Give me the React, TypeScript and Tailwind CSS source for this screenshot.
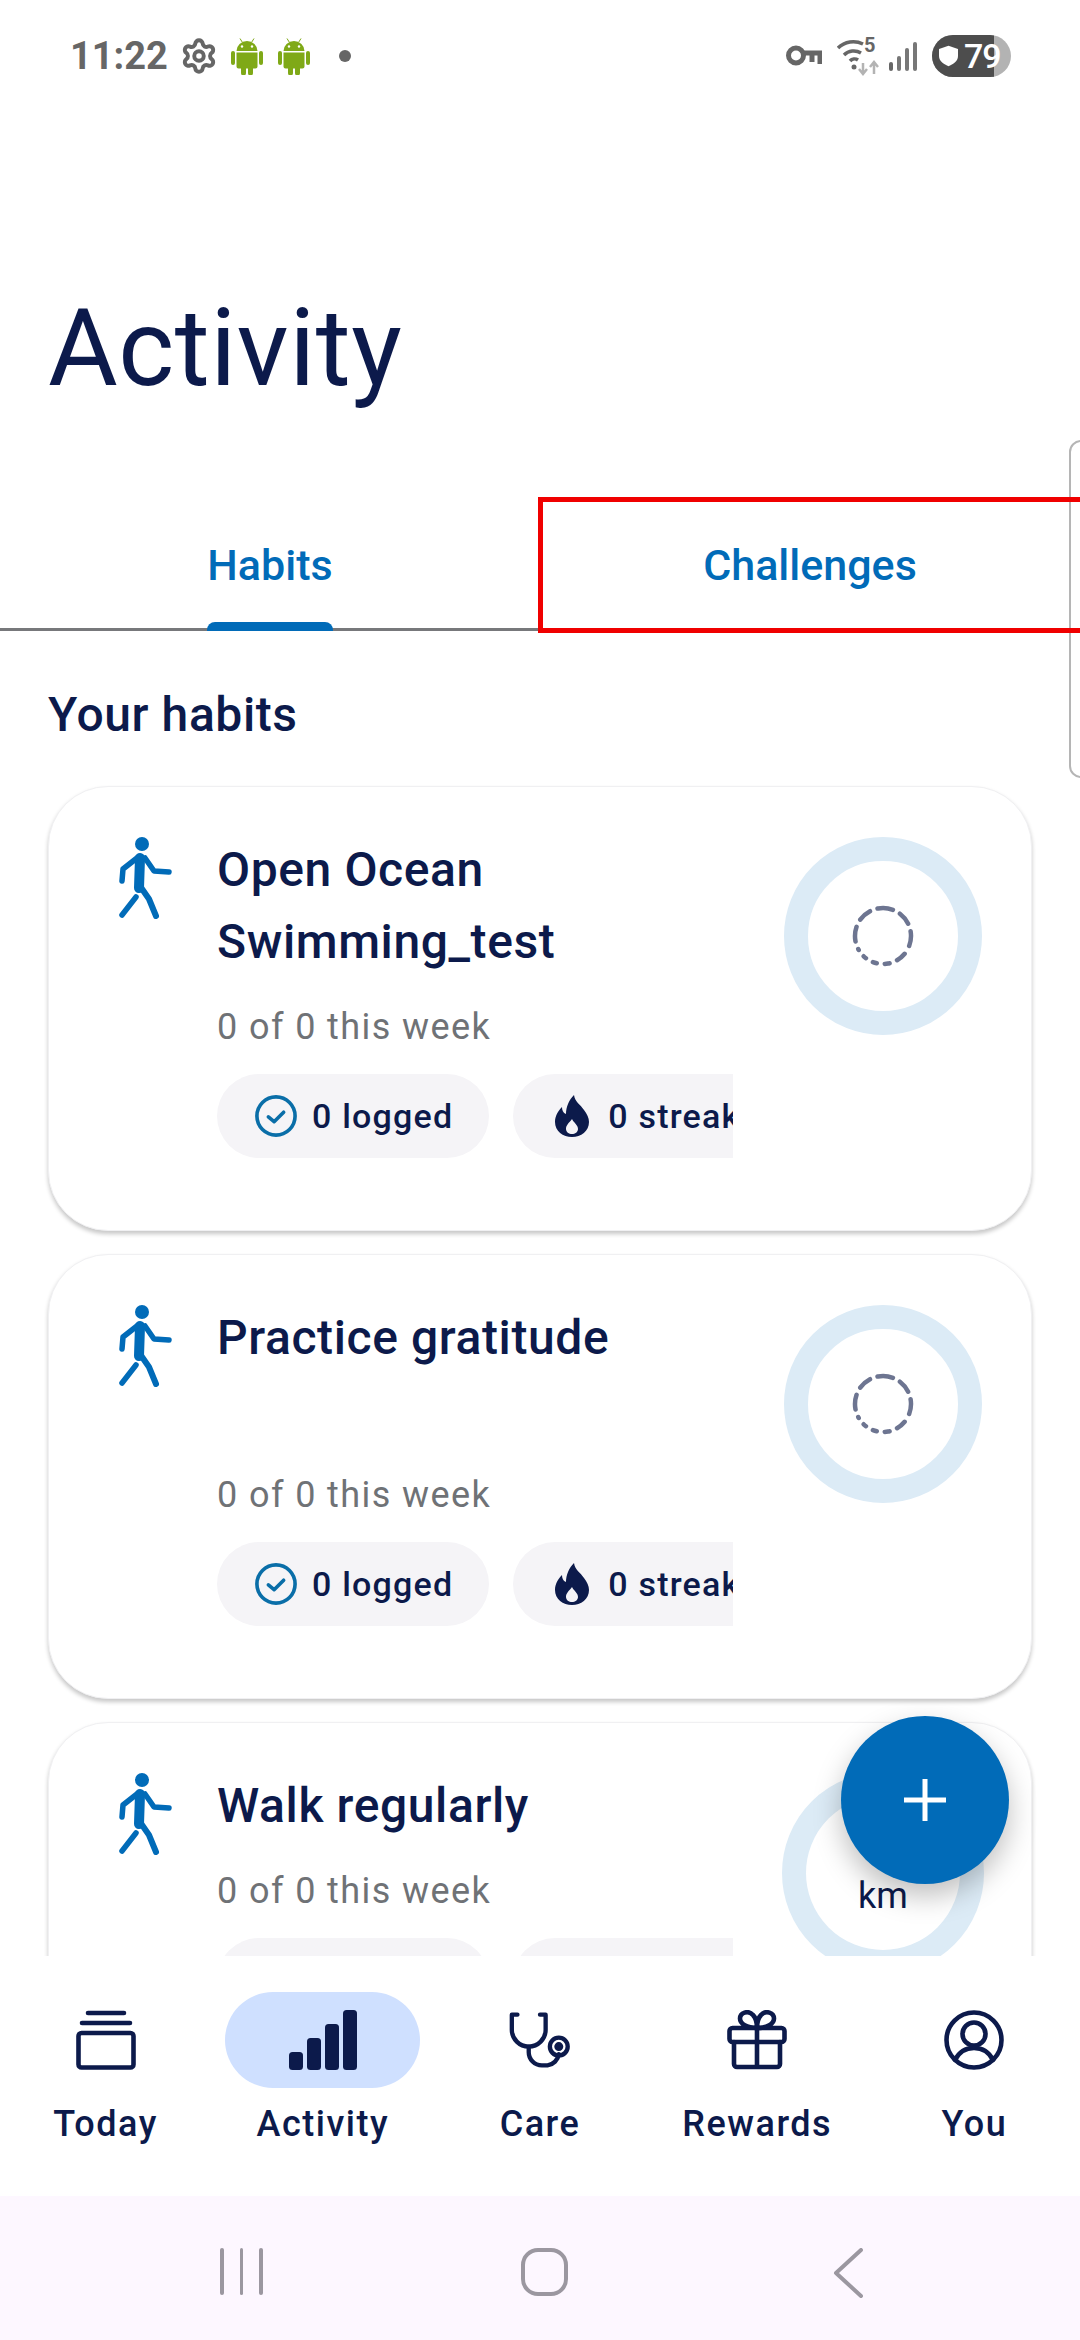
import { Settings } from "lucide-react";

const NAVY = "#0c1a4b";
const BLUE = "#016bb8";

function AndroidIcon() {
  return (
    <svg width="32" height="38" viewBox="0 0 32 38" fill="#7fa917">
      <path d="M9 1.5l2.2 3.5M23 1.5l-2.2 3.5" stroke="#7fa917" strokeWidth="1" />
      <path d="M5.5 14a10.5 10 0 0 1 21 0z" />
      <path d="M5.5 15.5h21v14a2 2 0 0 1-2 2h-2.5v4.5a2.5 2.5 0 0 1-5 0v-4.5h-2v4.5a2.5 2.5 0 0 1-5 0v-4.5H7.500a2 2 0 0 1-2-2z" />
      <rect x="0" y="14" width="4" height="14" rx="2" />
      <rect x="28" y="14" width="4" height="14" rx="2" />
      <circle cx="11" cy="9.500" r="1.200" fill="#fff" />
      <circle cx="21" cy="9.500" r="1.200" fill="#fff" />
    </svg>
  );
}

function StatusBar() {
  return (
    <div className="flex h-[85px] shrink-0 items-center justify-between pt-[26px] pl-[70px] pr-[69px]">
      <div className="flex items-center">
        <span className="w-[93px] text-[38px] font-bold leading-none text-[#666666]">11:22</span>
        <Settings size={38} strokeWidth={2.5} color="#666666" className="ml-[17px]" />
        <div className="ml-[13px] flex gap-[15px]">
          <AndroidIcon />
          <AndroidIcon />
        </div>
        <span className="ml-[29px] h-[12px] w-[12px] rounded-full bg-[#666666]" />
      </div>
      <div className="flex items-center">
        <svg width="36" height="22" viewBox="0 0 36 22" fill="none" stroke="#666666">
          <circle cx="10" cy="10.500" r="7.500" strokeWidth="5" />
          <path d="M17 8h17v11M26 8v9" strokeWidth="5" />
        </svg>
        <svg width="42" height="40" viewBox="0 0 42 40" fill="none" className="ml-[15px]">
          <path d="M1 12a22 22 0 0 1 25-4" stroke="#666666" strokeWidth="3.500" />
          <path d="M7 19a14 14 0 0 1 17-2" stroke="#666666" strokeWidth="3.500" />
          <path d="M13 25a6 6 0 0 1 8-1" stroke="#666666" strokeWidth="3.500" />
          <circle cx="17" cy="31" r="2.500" fill="#666666" />
          <path d="M26 27v11M22 33l4 5 4-5" stroke="#b3b3b3" strokeWidth="2.500" />
          <path d="M37 38V27M33 31l4-5 4 5" stroke="#b3b3b3" strokeWidth="2.500" />
          <text x="27" y="16" fontFamily="Roboto, sans-serif" fontSize="20" fontWeight="700" fill="#666666">5</text>
        </svg>
        <div className="ml-[10px] flex h-[30px] items-end gap-[4px]">
          <span className="h-[9px] w-[4px] rounded-full bg-[#666666]" />
          <span className="h-[15px] w-[4px] rounded-full bg-[#777777]" />
          <span className="h-[23px] w-[4px] rounded-full bg-[#777777]" />
          <span className="h-[29px] w-[4px] rounded-full bg-[#777777]" />
        </div>
        <div className="relative ml-[15px] flex h-[42px] w-[79px] items-center overflow-hidden rounded-full bg-[#b3b3b3]">
          <div className="absolute inset-y-0 left-0 w-[62px] bg-[#4d4d4d]" />
          <svg width="19" height="22" viewBox="0 0 24 26" fill="#fff" className="relative ml-[7px] shrink-0">
            <path d="M12 0l12 4v9c0 6-5 10-12 13C5 23 0 19 0 13V4z" />
          </svg>
          <span className="relative ml-[6px] text-[34px] font-medium leading-none tracking-[-1px] text-white">79</span>
        </div>
      </div>
    </div>
  );
}

function WalkIcon() {
  return (
    <svg width="60" height="85" viewBox="0 0 60 85" fill="none" stroke={BLUE} strokeLinecap="round" strokeLinejoin="round">
      <circle cx="26" cy="10" r="7" fill={BLUE} stroke="none" />
      <path d="M24 24l-1 30" strokeWidth="10" />
      <path d="M21 24L7 35l-1 12" strokeWidth="5.500" />
      <path d="M29 24l9 13 15 1" strokeWidth="5.500" />
      <path d="M24 52l9 13 7 17" strokeWidth="6" />
      <path d="M20 63L6 81" strokeWidth="5.500" />
    </svg>
  );
}

function CheckIcon() {
  return (
    <svg width="42" height="42" viewBox="0 0 44 44" fill="none" stroke="#0a6ea8">
      <circle cx="22" cy="22" r="20" strokeWidth="3.800" />
      <path d="M14 23l6 5 10-10" strokeWidth="3.800" strokeLinecap="round" strokeLinejoin="round" />
    </svg>
  );
}

function FlameIcon() {
  return (
    <svg width="34" height="42" viewBox="0 0 34 42" fill={NAVY}>
      <path
        fillRule="evenodd"
        d="M19 0c1 7 6 9 10 15 3 4 5 8 5 12 0 9-8 15-17 15S0 36 0 27c0-6 3-11 7-15 0 3 1 6 4 7C11 12 14 5 19 0zM17 24c-3 4-6 6-6 10 0 3 3 5 6 5s6-2 6-5c0-4-4-6-6-10z"
      />
    </svg>
  );
}

function Spinner() {
  return (
    <svg width="62" height="62" viewBox="0 0 62 62" fill="none">
      <circle
        cx="31"
        cy="31"
        r="28"
        stroke="#6d7591"
        strokeWidth="4.500"
        strokeLinecap="round"
        strokeDasharray="15 8 13 8 15 9 10 8 5 8 4 8 3 8 1 8"
        transform="rotate(-100 31 31)"
      />
    </svg>
  );
}

function Chip({ icon, label }: { icon: React.ReactNode; label: string }) {
  return (
    <div className="flex h-[84px] shrink-0 items-center rounded-full bg-[#f5f4f7] pl-[38px] pr-[36px]">
      <span className="flex w-[42px] shrink-0 justify-center">{icon}</span>
      <span className="ml-[15px] whitespace-nowrap text-[34px] font-medium tracking-[1.2px] text-[#0c1a4b]">{label}</span>
    </div>
  );
}

function HabitCard({ title, tall, ring }: { title: string[]; tall?: boolean; ring: React.ReactNode }) {
  return (
    <div className="flex h-[445px] shrink-0 rounded-[60px] border border-[#f0f0f2] bg-white pl-[67px] pt-[47px] shadow-[0_3px_4px_rgba(0,0,0,0.22)]">
      <div className="w-[101px] shrink-0">
        <WalkIcon />
      </div>
      <div className="w-[516px] shrink-0">
        <div className={`text-[48px] font-medium leading-[72px] tracking-[0.6px] text-[#0c1a4b] ${tall ? "h-[144px]" : ""}`}>
          {title.map((t) => (
            <div key={t}>{t}</div>
          ))}
        </div>
        <div className="mt-[25px] text-[36px] leading-[48px] tracking-[1.4px] text-[#6f7276]">0 of 0 this week</div>
        <div className="mt-[23px] flex gap-[24px] overflow-hidden">
          <Chip icon={<CheckIcon />} label="0 logged" />
          <Chip icon={<FlameIcon />} label="0 streak" />
        </div>
      </div>
      {ring}
    </div>
  );
}

const NAV_ICON = { fill: "none", stroke: NAVY, strokeWidth: 4.6, strokeLinecap: "round", strokeLinejoin: "round" } as const;

function NavItem({ label, active, children }: { label: string; active?: boolean; children: React.ReactNode }) {
  return (
    <div className="flex flex-1 flex-col items-center">
      <div className={`flex h-[96px] w-[195px] items-center justify-center rounded-full ${active ? "bg-[#cfe0ff]" : ""}`}>
        {children}
      </div>
      <div className="mt-[12px] text-[36px] font-medium leading-[48px] tracking-[1.5px] text-[#0c1a4b]">{label}</div>
    </div>
  );
}

function BottomNav() {
  return (
    <nav className="-mx-[3px] flex h-[240px] shrink-0 bg-white pt-[36px]">
      <NavItem label="Today">
        <svg width="62" height="60" viewBox="0 0 62 60" {...NAV_ICON}>
          <path d="M13 3h36M7 13h48" />
          <rect x="3.500" y="23" width="55" height="34.500" rx="3" />
        </svg>
      </NavItem>
      <NavItem label="Activity" active>
        <svg width="68" height="60" viewBox="0 0 68 60" fill={NAVY}>
          <rect x="0" y="42" width="14" height="18" rx="3.500" />
          <rect x="18" y="28" width="14" height="32" rx="3.500" />
          <rect x="36" y="14" width="14" height="46" rx="3.500" />
          <rect x="54" y="0" width="14" height="60" rx="3.500" />
        </svg>
      </NavItem>
      <NavItem label="Care">
        <svg width="62" height="60" viewBox="0 0 66 60" {...NAV_ICON}>
          <path d="M9 3H3v16a18 18 0 0 0 36 0V3h-6" />
          <path d="M21 37v6a14 14 0 0 0 14 14h6a14 14 0 0 0 12-12" />
          <circle cx="53" cy="37" r="9.500" />
          <circle cx="53" cy="37" r="2.500" fill={NAVY} />
        </svg>
      </NavItem>
      <NavItem label="Rewards">
        <svg width="60" height="60" viewBox="0 0 60 60" {...NAV_ICON}>
          <rect x="2.500" y="18" width="55" height="14" rx="3" />
          <path d="M7 32v22a3 3 0 0 0 3 3h40a3 3 0 0 0 3-3V32M30 18v39" />
          <path d="M30 18C20 18 13 14 13 8.500S21-.5 26 5c3 3 4 8 4 13 0-5 1-10 4-13 5-5.500 13-2 13 3.500S40 18 30 18z" />
        </svg>
      </NavItem>
      <NavItem label="You">
        <svg width="60" height="60" viewBox="0 0 60 60" {...NAV_ICON}>
          <circle cx="30" cy="30" r="27.500" />
          <circle cx="30" cy="24" r="11.500" />
          <path d="M11 50c4-8 11-12 19-12s15 4 19 12" />
        </svg>
      </NavItem>
    </nav>
  );
}

function SystemNav() {
  return (
    <div className="flex h-[144px] shrink-0 items-start bg-[#fdf7ff] pt-[52px]">
      <div className="ml-[220px] flex h-[47px] gap-[16px]">
        <span className="w-[3.500px] rounded-full bg-[#9b97a0]" />
        <span className="w-[3.500px] rounded-full bg-[#9b97a0]" />
        <span className="w-[3.500px] rounded-full bg-[#9b97a0]" />
      </div>
      <div className="ml-[258px] h-[48px] w-[47px] rounded-[17px] border-[4px] border-[#9b97a0]" />
      <svg width="30" height="50" viewBox="0 0 30 50" fill="none" stroke="#9b97a0" strokeWidth="4" strokeLinecap="round" strokeLinejoin="round" className="ml-[265px]">
        <path d="M28 2L3 25l25 23" />
      </svg>
    </div>
  );
}

export default function App() {
  return (
    <div className="relative flex h-[2340px] w-[1080px] flex-col overflow-hidden bg-white font-['Roboto',sans-serif]">
      <StatusBar />
      <h1 className="mt-[214px] h-[100px] pl-[48px] text-[107px] font-normal leading-[100px] tracking-[0.5px] text-[#0c1a4b]">Activity</h1>

      <div className="relative mt-[136px] flex h-[96px] shrink-0 border-b-[3px] border-[#77787b]">
        <div className="relative flex w-[540px] justify-center">
          <span className="text-[43px] font-medium leading-[60px] text-[#016bb8]">Habits</span>
          <span className="absolute bottom-[-3px] left-[207px] h-[9px] w-[126px] rounded-t-[8px] bg-[#016bb8]" />
        </div>
        <div className="flex w-[540px] justify-center">
          <span className="text-[43px] font-medium leading-[60px] text-[#016bb8]">Challenges</span>
        </div>
      </div>

      <main className="flex flex-1 flex-col overflow-hidden px-[48px]">
        <h2 className="mt-[54px] text-[48px] font-medium leading-[60px] tracking-[0.6px] text-[#0c1a4b]">Your habits</h2>
        <div className="mt-[41px] flex flex-col gap-[23px]">
          <HabitCard
            title={["Open Ocean", "Swimming_test"]}
            tall
            ring={
              <div className="ml-[51px] mt-[3px] flex h-[198px] w-[198px] shrink-0 items-center justify-center rounded-full border-[24px] border-[#dcebf6]">
                <Spinner />
              </div>
            }
          />
          <HabitCard
            title={["Practice gratitude"]}
            tall
            ring={
              <div className="ml-[51px] mt-[3px] flex h-[198px] w-[198px] shrink-0 items-center justify-center rounded-full border-[24px] border-[#dcebf6]">
                <Spinner />
              </div>
            }
          />
          <HabitCard
            title={["Walk regularly"]}
            ring={
              <div className="ml-[49px] mt-[2px] flex h-[202px] w-[202px] shrink-0 items-center justify-center rounded-full border-[24px] border-[#dcebf6]">
                <span className="mt-[46px] text-[36px] leading-none text-[#0c1a4b]">km</span>
              </div>
            }
          />
        </div>
      </main>

      <BottomNav />
      <SystemNav />

      {/* overlays */}
      <div className="absolute left-[1069px] top-[440px] h-[338px] w-[20px] rounded-l-[12px] border-2 border-[#b5b5b5] bg-white" />
      <div className="absolute left-[538px] top-[497px] h-[136px] w-[542px] border-[5px] border-r-0 border-[#f00000]" />
      <button className="absolute left-[841px] top-[1716px] flex h-[168px] w-[168px] items-center justify-center rounded-full bg-[#016bb8] shadow-[0_12px_28px_rgba(0,0,0,0.25)]">
        <svg width="44" height="44" viewBox="0 0 44 44" stroke="#fff" strokeWidth="5">
          <path d="M22 1v42M1 22h42" />
        </svg>
      </button>
    </div>
  );
}
